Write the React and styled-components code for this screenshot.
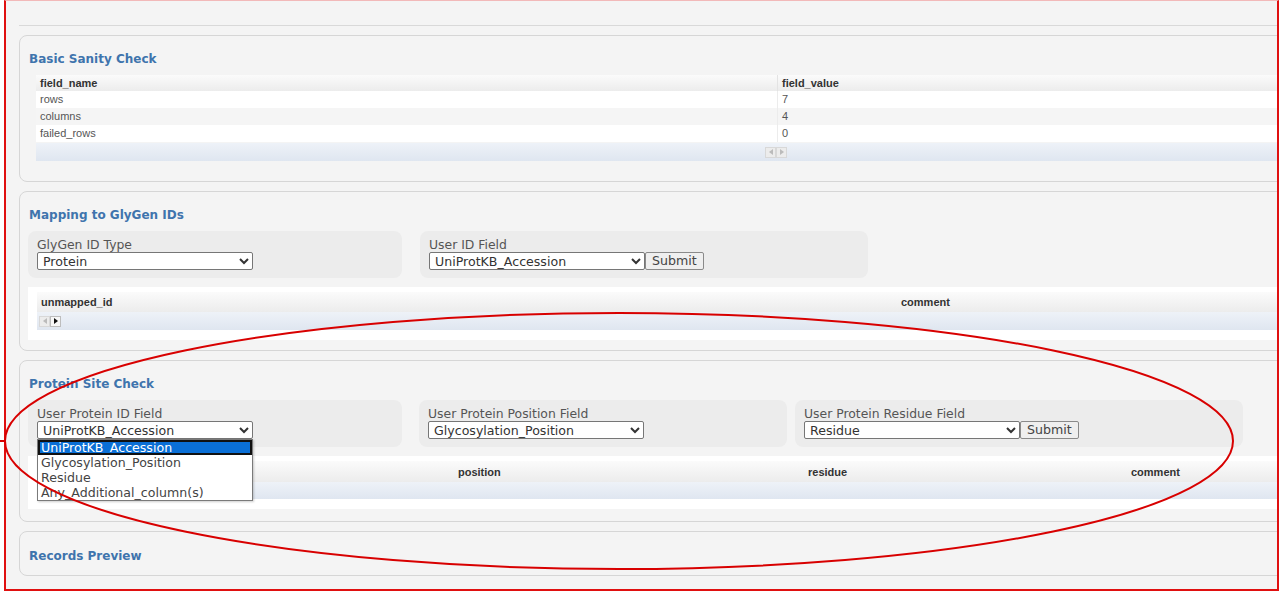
import React from 'react'
import styled, { createGlobalStyle } from 'styled-components'

const GlobalStyle = createGlobalStyle`
  body {
    margin: 0;
    background: #fff;
    font-family: "DejaVu Sans", Verdana, sans-serif;
  }
`

const Page = styled.div`
  position: relative;
  width: 1285px;
  height: 594px;
  overflow: hidden;
`

const Frame = styled.div`
  box-sizing: border-box;
  margin-left: 4px;
  width: 1275px;
  height: 591px;
  border-top: 1px solid #f2b9b9;
  border-left: 2px solid #e01010;
  border-right: 2px solid #e01010;
  border-bottom: 2px solid #e01010;
  background: #f4f4f4;
  overflow: hidden;
  padding: 24px 0 0 13px;
`

const Rule = styled.div`
  border-top: 1px solid #d9d9d9;
  margin-right: -20px;
  margin-bottom: 9px;
`

const Panel = styled.section`
  box-sizing: border-box;
  width: calc(100% + 30px);
  border: 1px solid #d6d6d6;
  border-radius: 8px;
  padding: ${p => p.$top || 15}px 0 ${p => p.$bottom || 11}px 8px;
  margin-bottom: 9px;
`

const Title = styled.h3`
  margin: 0 0 0 1px;
  font-family: "DejaVu Sans", Verdana, sans-serif;
  font-size: 12px;
  line-height: 16px;
  font-weight: bold;
  color: #3f74ad;
`

const Forms = styled.div`
  display: flex;
  margin-top: 8px;
`

const Group = styled.div`
  position: relative;
  box-sizing: border-box;
  width: ${p => p.$w}px;
  margin-right: ${p => p.$gap || 0}px;
  height: 47px;
  background: #ececec;
  border-radius: 8px;
  padding: 7px 9px 0;
`

const Label = styled.label`
  display: block;
  font-size: 12.4px;
  line-height: 14px;
  height: 14px;
  color: #555;
`

const Row = styled.div`
  display: flex;
`

const Select = styled.select`
  display: block;
  box-sizing: border-box;
  width: 216px;
  height: 18px;
  margin: 0;
  padding: 0 1px;
  border: 1px solid #767676;
  border-radius: 2px;
  background: #fff;
  color: #333;
  font-family: "DejaVu Sans", Verdana, sans-serif;
  font-size: 12.6px;
`

const Button = styled.button`
  box-sizing: border-box;
  height: 18px;
  margin: 0;
  padding: 0 6px;
  border: 1px solid #8a8a8a;
  border-radius: 2px;
  background: #efefef;
  color: #444;
  font-family: "DejaVu Sans", Verdana, sans-serif;
  font-size: 12.6px;
  line-height: 14px;
`

const ListBox = styled.ul`
  position: absolute;
  left: 9px;
  top: 39px;
  z-index: 2;
  box-sizing: border-box;
  width: 216px;
  margin: 0;
  padding: 0;
  list-style: none;
  background: #fff;
  border: 1px solid #7a7a7a;
  box-shadow: 1px 1px 2px rgba(0, 0, 0, 0.2);
`

const Option = styled.li`
  box-sizing: border-box;
  height: 15px;
  line-height: 16px;
  padding: 0 3px;
  font-size: 12.6px;
  white-space: nowrap;
  color: ${p => (p.$active ? '#fff' : '#444')};
  background: ${p => (p.$active ? '#0a6fd6' : '#fff')};
  outline: ${p => (p.$active ? '2px solid #111' : 'none')};
  outline-offset: -2px;
`

const TableWrap = styled.div`
  margin-top: 9px;
  padding: 5px 0 10px 9px;
  background: #fff;
`

const Grid = styled.div`
  display: grid;
  grid-template-columns: ${p => p.$cols};
  margin: ${p => p.$margin || 0};
  font-family: "Liberation Sans", Arial, sans-serif;
  font-size: 11px;
`

const Head = styled.div`
  height: ${p => p.$h || 16}px;
  line-height: ${p => (p.$h || 16) + 1}px;
  padding-left: 4px;
  font-weight: bold;
  color: #333;
  background: linear-gradient(#fbfbfb, #ececec);
  border-left: ${p => (p.$divider ? '1px solid #e3e3e3' : 'none')};
  white-space: nowrap;
`

const Cell = styled.div`
  height: 17px;
  line-height: 17px;
  padding-left: 4px;
  color: #555;
  background: ${p => (p.$alt ? '#f5f5f5' : '#fff')};
  border-left: ${p => (p.$divider ? '1px solid #ececec' : 'none')};
`

const ScrollRow = styled.div`
  grid-column: 1 / -1;
  display: flex;
  align-items: center;
  height: ${p => p.$h || 18}px;
  margin-top: ${p => p.$mt || 0}px;
  padding-left: ${p => p.$pad || 0}px;
  background: linear-gradient(#eef2f8, #dfe6f0);
`

const ScrollBtn = styled.span`
  box-sizing: border-box;
  display: inline-flex;
  align-items: center;
  justify-content: center;
  width: 11px;
  height: 11px;
  border: 1px solid ${p => (p.$on ? '#bdbdbd' : '#d8d8d8')};
  background: ${p => (p.$on ? '#f7f7f7' : '#ececec')};
  &::before {
    content: '';
    border-top: 3px solid transparent;
    border-bottom: 3px solid transparent;
    ${p => (p.$dir === 'left' ? 'border-right' : 'border-left')}: 4px solid ${p => (p.$on ? '#111' : '#bbb')};
  }
`

const Overlay = styled.svg`
  position: absolute;
  left: 0;
  top: 0;
  pointer-events: none;
  z-index: 5;
`

const sanity = [
  ['rows', '7'],
  ['columns', '4'],
  ['failed_rows', '0'],
]

const columnOptions = ['UniProtKB_Accession', 'Glycosylation_Position', 'Residue', 'Any_Additional_column(s)']

const Arrows = ({ right }) => (
  <>
    <ScrollBtn $dir="left" />
    <ScrollBtn $dir="right" $on={right} />
  </>
)

const App = () => {
  return (
    <Page>
      <GlobalStyle />
      <Frame>
        <Rule />

        <Panel $bottom={20}>
          <Title>Basic Sanity Check</Title>
          <Grid $cols="741px 1fr" $margin="8px 0 0 8px">
            <Head>field_name</Head>
            <Head $divider>field_value</Head>
            {sanity.map(([name, value], i) => (
              <React.Fragment key={name}>
                <Cell $alt={i % 2 === 1}>{name}</Cell>
                <Cell $alt={i % 2 === 1} $divider>{value}</Cell>
              </React.Fragment>
            ))}
            <ScrollRow $mt={1} $pad={729}>
              <Arrows />
            </ScrollRow>
          </Grid>
        </Panel>

        <Panel $bottom={10}>
          <Title>Mapping to GlyGen IDs</Title>
          <Forms>
            <Group $w={374} $gap={18}>
              <Label>GlyGen ID Type</Label>
              <Select defaultValue="Protein">
                <option>Protein</option>
              </Select>
            </Group>
            <Group $w={448}>
              <Label>User ID Field</Label>
              <Row>
                <Select defaultValue="UniProtKB_Accession">
                  {columnOptions.map(o => <option key={o}>{o}</option>)}
                </Select>
                <Button>Submit</Button>
              </Row>
            </Group>
          </Forms>
          <TableWrap>
            <Grid $cols="860px 1fr">
              <Head $h={20}>unmapped_id</Head>
              <Head $h={20}>comment</Head>
              <ScrollRow $pad={2}>
                <Arrows right />
              </ScrollRow>
            </Grid>
          </TableWrap>
        </Panel>

        <Panel $bottom={12}>
          <Title>Protein Site Check</Title>
          <Forms>
            <Group $w={374} $gap={17}>
              <Label>User Protein ID Field</Label>
              <Select defaultValue="UniProtKB_Accession">
                {columnOptions.map(o => <option key={o}>{o}</option>)}
              </Select>
              <ListBox>
                {columnOptions.map((o, i) => (
                  <Option key={o} $active={i === 0}>{o}</Option>
                ))}
              </ListBox>
            </Group>
            <Group $w={368} $gap={8}>
              <Label>User Protein Position Field</Label>
              <Select defaultValue="Glycosylation_Position">
                {columnOptions.map(o => <option key={o}>{o}</option>)}
              </Select>
            </Group>
            <Group $w={448}>
              <Label>User Protein Residue Field</Label>
              <Row>
                <Select defaultValue="Residue">
                  {columnOptions.map(o => <option key={o}>{o}</option>)}
                </Select>
                <Button>Submit</Button>
              </Row>
            </Group>
          </Forms>
          <TableWrap>
            <Grid $cols="417px 350px 323px 1fr">
              <Head $h={21} />
              <Head $h={21}>position</Head>
              <Head $h={21}>residue</Head>
              <Head $h={21}>comment</Head>
              <ScrollRow $h={17} />
            </Grid>
          </TableWrap>
        </Panel>

        <Panel $top={16} $bottom={11}>
          <Title>Records Preview</Title>
        </Panel>
      </Frame>

      <Overlay width="1285" height="594" viewBox="0 0 1285 594">
        <ellipse cx="619" cy="441" rx="614" ry="128" fill="none" stroke="#d80000" strokeWidth="2" />
        <line x1="0" y1="441" x2="6" y2="441" stroke="#d80000" strokeWidth="2" />
      </Overlay>
    </Page>
  )
}

export default App
